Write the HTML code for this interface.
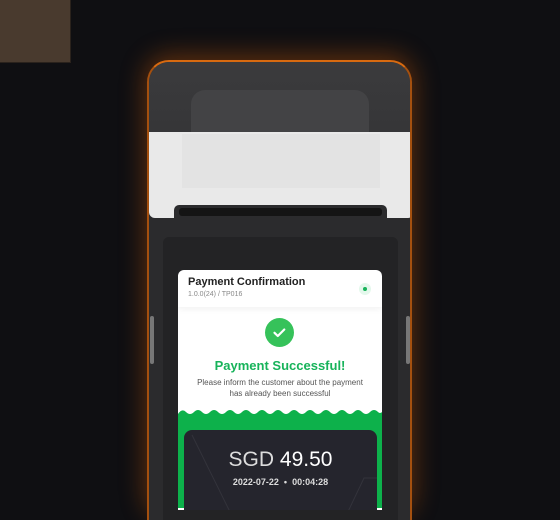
<!DOCTYPE html>
<html><head><style>
*{margin:0;padding:0;box-sizing:border-box}
body{width:560px;height:501px;overflow:hidden;background:#0f0f12;position:relative;font-family:"Liberation Sans",sans-serif}
.abs{position:absolute}
</style></head><body>
<div class="abs" style="left:0;top:0;width:71px;height:63px;background:#493a2e;border-right:1px solid #2a221c;border-bottom:1px solid #2a221c"></div>
<div class="abs" style="left:147px;top:60px;width:265px;height:460px;border-radius:24px;box-shadow:0 -3px 24px 3px rgba(230,100,10,0.35)"></div>
<div class="abs" style="left:147px;top:60px;width:265px;height:460px;border-radius:22px 22px 0 0;background:#2b2b2d;border-top:2px solid #d86a10;border-left:2px solid #a5500f;border-right:2px solid #a5500f;overflow:hidden">
  <div class="abs" style="left:0;top:0;width:265px;height:80px;background:linear-gradient(#3b3b3d,#353537)"></div>
  <div class="abs" style="left:42px;top:28px;width:178px;height:60px;border-radius:14px 14px 0 0;background:#434345"></div>
  <div class="abs" style="left:0;top:70px;width:265px;height:86px;background:#e9e9e9;border-radius:0 0 6px 6px"></div>
  <div class="abs" style="left:33px;top:72px;width:198px;height:54px;background:#e3e3e3"></div>
  <div class="abs" style="left:25px;top:143px;width:213px;height:20px;background:#2b2b2d;border-radius:5px 5px 0 0"></div>
  <div class="abs" style="left:30px;top:146px;width:203px;height:8px;background:#141414;border-radius:3px"></div>
  <div class="abs" style="left:14px;top:175px;width:235px;height:300px;background:#232325;border-radius:6px"></div>
</div>
<div class="abs" style="left:150px;top:316px;width:4px;height:48px;background:#777;border-radius:2px"></div>
<div class="abs" style="left:406px;top:316px;width:4px;height:48px;background:#777;border-radius:2px"></div>
<div class="abs" style="left:178px;top:270px;width:204px;height:240px;background:#fff;border-radius:6px 6px 0 0;overflow:hidden">
  <div class="abs" style="left:0;top:0;width:204px;height:37px;box-shadow:0 2px 6px rgba(0,0,0,0.06)">
    <div class="abs" style="left:10px;top:6px;font-size:11px;font-weight:bold;color:#222">Payment Confirmation</div>
    <div class="abs" style="left:10px;top:21px;font-size:7px;color:#888">1.0.0(24) / TP016</div>
    <div class="abs" style="left:181px;top:13px;width:12px;height:12px;border-radius:50%;background:#e4f8ec"></div>
    <div class="abs" style="left:185px;top:17px;width:4px;height:4px;border-radius:50%;background:#17b35a"></div>
  </div>
  <div class="abs" style="left:87px;top:48px;width:29px;height:29px;border-radius:50%;background:#36c25a">
    <svg width="29" height="29" viewBox="0 0 29 29"><path d="M9.5 14.8l3.3 3.2 6.5-6.5" stroke="#fff" stroke-width="2.2" fill="none" stroke-linecap="round" stroke-linejoin="round"/></svg>
  </div>
  <div class="abs" style="left:0;top:88px;width:204px;text-align:center;font-size:13px;font-weight:bold;color:#17b35a">Payment Successful!</div>
  <div class="abs" style="left:0;top:107px;width:204px;text-align:center;font-size:8px;line-height:11px;color:#555">Please inform the customer about the payment<br>has already been successful</div>
  <svg class="abs" style="left:0;top:138px" width="204" height="100" viewBox="0 0 204 100">
    <path d="M0 6 Q4 0 8 4 Q12 8 16 4 Q20 0 24 4 Q28 8 32 4 Q36 0 40 4 Q44 8 48 4 Q52 0 56 4 Q60 8 64 4 Q68 0 72 4 Q76 8 80 4 Q84 0 88 4 Q92 8 96 4 Q100 0 104 4 Q108 8 112 4 Q116 0 120 4 Q124 8 128 4 Q132 0 136 4 Q140 8 144 4 Q148 0 152 4 Q156 8 160 4 Q164 0 168 4 Q172 8 176 4 Q180 0 184 4 Q188 8 192 4 Q196 0 200 4 Q202 6 204 4 L204 100 L0 100Z" fill="#0db14b"/>
  </svg>
  <div class="abs" style="left:6px;top:160px;width:193px;height:90px;background:#25252d;border-radius:8px;overflow:hidden">
    <svg class="abs" style="left:0;top:0" width="193" height="90"><path d="M8 5 L50 90" stroke="#33333b" stroke-width="1" fill="none"/><path d="M160 90 L180 48 L193 48" stroke="#33333b" fill="none"/></svg>
    <div class="abs" style="left:0;top:18px;width:193px;text-align:center;color:#fff;font-size:21px;white-space:nowrap"><span style="font-weight:300;color:#ddd">SGD</span> <span>49.50</span></div>
    <div class="abs" style="left:0;top:47px;width:193px;text-align:center;color:#ddd;font-size:9px;font-weight:bold">2022-07-22 &nbsp;•&nbsp; 00:04:28</div>
  </div>
</div>
</body></html>
